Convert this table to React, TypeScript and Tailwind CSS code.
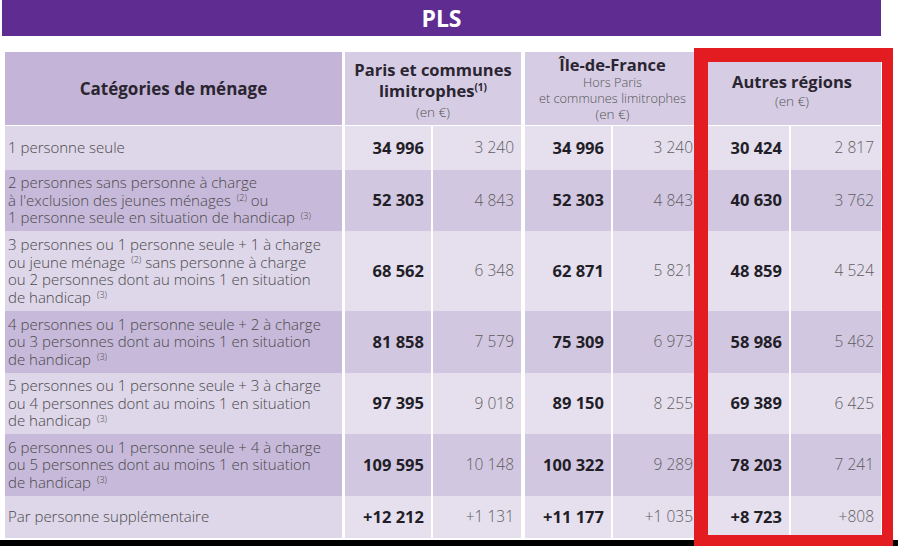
import type { ReactNode } from "react";

type Row = {
  label: ReactNode;
  values: [string, string, string, string, string, string];
  height: string;
  dark: boolean;
};

function Sup({ n }: { n: number }) {
  return <sup className="ml-[2px] text-[9px] leading-none">({n})</sup>;
}

const ROWS: Row[] = [
  {
    label: "1 personne seule",
    values: ["34 996", "3 240", "34 996", "3 240", "30 424", "2 817"],
    height: "h-[44px]",
    dark: false,
  },
  {
    label: (
      <>
        2 personnes sans personne à charge
        <br />à l'exclusion des jeunes ménages <Sup n={2} /> ou
        <br />1 personne seule en situation de handicap <Sup n={3} />
      </>
    ),
    values: ["52 303", "4 843", "52 303", "4 843", "40 630", "3 762"],
    height: "h-[61px]",
    dark: true,
  },
  {
    label: (
      <>
        3 personnes ou 1 personne seule + 1 à charge
        <br />
        ou jeune ménage <Sup n={2} /> sans personne à charge
        <br />
        ou 2 personnes dont au moins 1 en situation
        <br />
        de handicap <Sup n={3} />
      </>
    ),
    values: ["68 562", "6 348", "62 871", "5 821", "48 859", "4 524"],
    height: "h-[80px]",
    dark: false,
  },
  {
    label: (
      <>
        4 personnes ou 1 personne seule + 2 à charge
        <br />
        ou 3 personnes dont au moins 1 en situation
        <br />
        de handicap <Sup n={3} />
      </>
    ),
    values: ["81 858", "7 579", "75 309", "6 973", "58 986", "5 462"],
    height: "h-[62px]",
    dark: true,
  },
  {
    label: (
      <>
        5 personnes ou 1 personne seule + 3 à charge
        <br />
        ou 4 personnes dont au moins 1 en situation
        <br />
        de handicap <Sup n={3} />
      </>
    ),
    values: ["97 395", "9 018", "89 150", "8 255", "69 389", "6 425"],
    height: "h-[61px]",
    dark: false,
  },
  {
    label: (
      <>
        6 personnes ou 1 personne seule + 4 à charge
        <br />
        ou 5 personnes dont au moins 1 en situation
        <br />
        de handicap <Sup n={3} />
      </>
    ),
    values: ["109 595", "10 148", "100 322", "9 289", "78 203", "7 241"],
    height: "h-[62px]",
    dark: true,
  },
  {
    label: "Par personne supplémentaire",
    values: ["+12 212", "+1 131", "+11 177", "+1 035", "+8 723", "+808"],
    height: "h-[42px]",
    dark: false,
  },
];

// widths + left gaps of the six number columns
const COLS = [
  "ml-[3px] w-[86px]",
  "ml-[2px] w-[88px]",
  "ml-[4px] w-[86px]",
  "ml-[2px] w-[87px]",
  "ml-[3px] w-[86px]",
  "ml-[2px] w-[90px]",
];

function BodyRow({ row }: { row: Row }) {
  const labelBg = row.dark ? "bg-[#c7b9da]" : "bg-[#ded6e9]";
  const cellBg = row.dark ? "bg-[#d2c7e1]" : "bg-[#e5dfee]";
  return (
    <div className={`flex ${row.height}`}>
      <div
        className={`flex w-[337px] items-center pl-[3px] text-[15px] font-light leading-[17.5px] text-[#4a4a4a] ${labelBg}`}
      >
        <p>{row.label}</p>
      </div>
      {row.values.map((value, index) => (
        <div
          key={index}
          className={`flex items-center justify-end pr-[7px] ${COLS[index]} ${cellBg} ${
            index % 2 === 0
              ? "text-[16.5px] font-bold text-[#221e27]"
              : "text-[15.5px] font-light text-[#5e5e5e]"
          }`}
        >
          {value}
        </div>
      ))}
    </div>
  );
}

export default function App() {
  return (
    <div
      className="relative h-[546px] w-[898px] overflow-hidden bg-white"
      style={{ fontFamily: '"Open Sans", "Noto Sans", sans-serif' }}
    >
      <div className="ml-[2px] flex h-[36px] w-[879px] items-center justify-center bg-[#5f2d91] text-[23px] font-bold text-white">
        PLS
      </div>

      <div className="ml-[5px] mt-[16px] w-[876px]">
        <div className="flex h-[73px] text-[#2a2530]">
          <div className="flex w-[337px] items-center justify-center bg-[#c4b4d7] text-[17px] font-bold">
            Catégories de ménage
          </div>
          <div className="ml-[3px] flex w-[176px] flex-col items-center justify-center bg-[#d6cde4] pt-[2px] text-center">
            <p className="text-[16.5px] font-bold leading-[21px]">Paris et communes</p>
            <p className="text-[16.5px] font-bold leading-[21px]">
              limitrophes<span className="relative -top-[6px] text-[10px]">(1)</span>
            </p>
            <p className="text-[13.5px] font-light leading-[17px] text-[#555]">(en €)</p>
          </div>
          <div className="ml-[4px] flex w-[175px] flex-col items-center justify-center bg-[#d6cde4] text-center">
            <p className="text-[16.5px] font-bold leading-[20px]">Île-de-France</p>
            <p className="text-[12.8px] font-light leading-[15px] text-[#555]">Hors Paris</p>
            <p className="text-[12.8px] font-light leading-[16px] text-[#555]">
              et communes limitrophes
            </p>
            <p className="text-[13.5px] font-light leading-[17px] text-[#555]">(en €)</p>
          </div>
          <div className="ml-[3px] flex w-[178px] flex-col items-center justify-center bg-[#d6cde4] pt-[4px] text-center">
            <p className="text-[16.5px] font-bold leading-[20px]">Autres régions</p>
            <p className="text-[13.5px] font-light leading-[18px] text-[#555]">(en €)</p>
          </div>
        </div>
        <div className="mt-[1px]">
          {ROWS.map((row, index) => (
            <BodyRow key={index} row={row} />
          ))}
        </div>
      </div>

      <div className="absolute bottom-0 left-0 h-[6px] w-full bg-black" />
      <div className="absolute left-[694px] top-[48px] h-[498px] w-[199px] border-b-[11px] border-l-[14px] border-r-[11px] border-t-[14px] border-[#e31c22]" />
    </div>
  );
}
